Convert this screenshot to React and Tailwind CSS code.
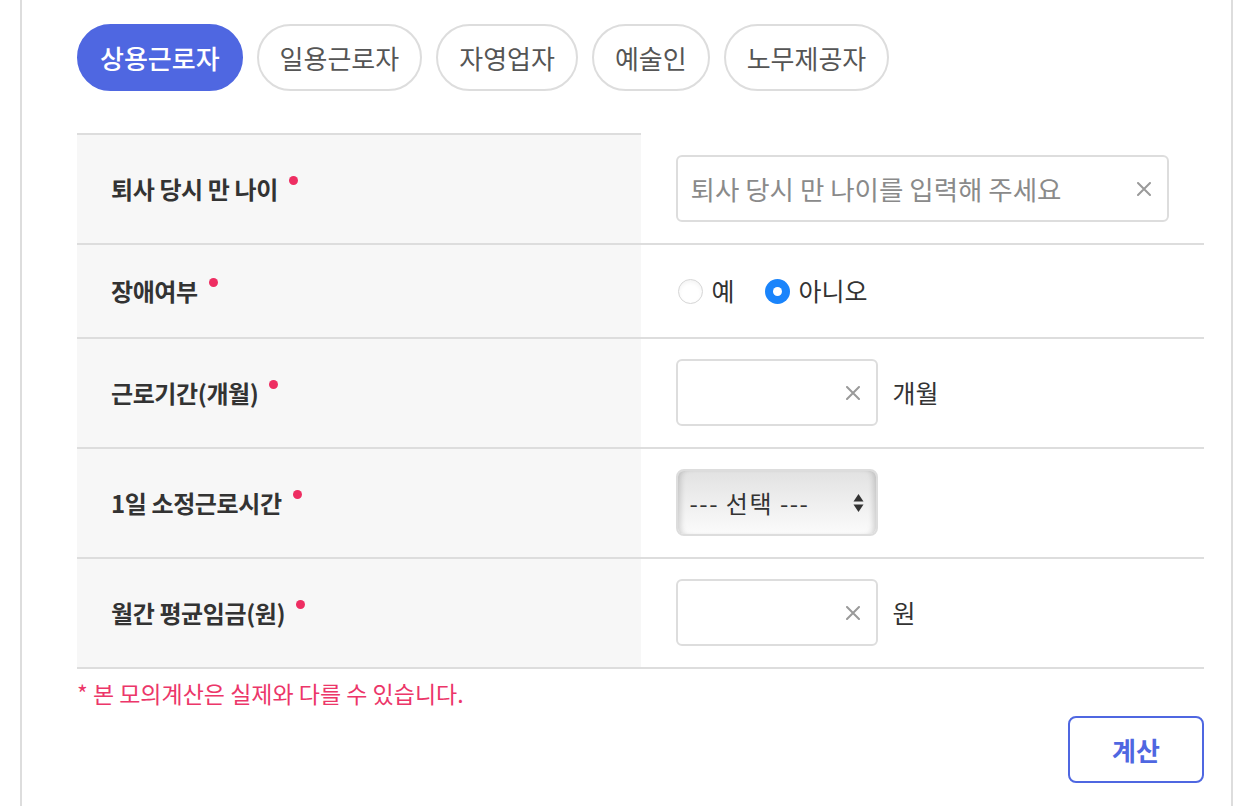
import React, { useState } from "react";

const tabs = ["상용근로자", "일용근로자", "자영업자", "예술인", "노무제공자"];

function ClearIcon() {
    return (
        <svg width="14" height="14" viewBox="0 0 14 14" className="shrink-0">
            <path d="M1 1 L13 13 M13 1 L1 13" stroke="#9a9a9a" strokeWidth="2" strokeLinecap="round" />
        </svg>
    );
}

function Label({ children, first }) {
    return (
        <div
            className={
                "flex items-center bg-[#f7f7f7] pl-[34px] py-[30px] border-b-2 border-[#dddddd] " +
                (first ? "border-t-2" : "")
            }
        >
            <span className="text-[24px] leading-[32px] font-bold text-[#333] tracking-[-0.4px]">{children}</span>
            <span className="ml-[11px] mb-[18px] w-[9px] h-[9px] rounded-full bg-[#ee2e62]"></span>
        </div>
    );
}

function Field({ children, first, pad }) {
    return (
        <div
            className={
                "flex items-center px-[35px] border-b-2 border-[#dddddd] " +
                (first ? "mt-[2px] " : "") +
                (pad ? "pt-[20px] pb-[21px]" : "")
            }
        >
            {children}
        </div>
    );
}

function TextBox({ placeholder, className }) {
    return (
        <div
            className={
                "flex items-center h-[67px] rounded-md border-2 border-[#dddddd] bg-white pl-[13px] pr-[16px] " +
                className
            }
        >
            <span className="flex-1 text-[26.5px] text-[#8a8a8a] whitespace-nowrap">{placeholder}</span>
            <ClearIcon />
        </div>
    );
}

function Radio({ checked, label, onClick }) {
    return (
        <button className="flex items-center gap-[9px]" onClick={onClick}>
            {checked ? (
                <span className="flex items-center justify-center w-[25px] h-[25px] rounded-full bg-[#1a84fb]">
                    <span className="w-[9px] h-[9px] rounded-full bg-white"></span>
                </span>
            ) : (
                <span className="w-[25px] h-[25px] rounded-full border border-[#d6d6d6] bg-white shadow-inner"></span>
            )}
            <span className="text-[25px] text-[#333]">{label}</span>
        </button>
    );
}

export default function App() {
    const [active, setActive] = useState(0);
    const [disabled, setDisabled] = useState(false);

    return (
        <div className="min-h-[806px] bg-white font-['Noto_Sans_CJK_KR','Noto_Sans',sans-serif]">
            <div className="ml-[20px] w-[1213px] min-h-[806px] border-x-2 border-[#dddddd] pl-[55px] pr-[27px] pt-[24px]">
                {/* tabs */}
                <div className="flex items-center gap-[14px]">
                    {tabs.map((t, i) => (
                        <button
                            key={t}
                            onClick={() => setActive(i)}
                            className={
                                "h-[67px] rounded-full px-[21px] text-[26px] whitespace-nowrap " +
                                (active === i
                                    ? "bg-[#4f67e1] text-white font-medium border-2 border-[#4f67e1]"
                                    : "bg-white text-[#555] border-2 border-[#dddddd]")
                            }
                        >
                            {t}
                        </button>
                    ))}
                </div>

                {/* form table */}
                <div className="grid grid-cols-2 mt-[42px]">
                    <Label first>퇴사 당시 만 나이</Label>
                    <Field first pad>
                        <TextBox placeholder="퇴사 당시 만 나이를 입력해 주세요" className="w-full" />
                    </Field>

                    <Label>장애여부</Label>
                    <Field>
                        <div className="flex items-center gap-[30px] pl-[2px]">
                            <Radio checked={disabled} label="예" onClick={() => setDisabled(true)} />
                            <Radio checked={!disabled} label="아니오" onClick={() => setDisabled(false)} />
                        </div>
                    </Field>

                    <Label>근로기간(개월)</Label>
                    <Field pad>
                        <TextBox placeholder="" className="w-[202px]" />
                        <span className="ml-[15px] text-[25px] text-[#333]">개월</span>
                    </Field>

                    <Label>1일 소정근로시간</Label>
                    <Field pad>
                        <div className="flex items-center w-[202px] h-[67px] rounded-lg border-2 border-[#dddddd] bg-gradient-to-b from-[#e2e2e2] to-[#fbfbfb] shadow-[inset_6px_0_6px_-4px_rgba(0,0,0,0.18),inset_-6px_0_6px_-4px_rgba(0,0,0,0.18)] pl-[12px] pr-[12px]">
                            <span className="flex-1 text-[24px] tracking-[1.5px] text-[#333] whitespace-nowrap">--- 선택 ---</span>
                            <svg width="11" height="20" viewBox="0 0 11 20">
                                <path d="M5.5 1 L10.5 8.5 L0.5 8.5 Z" fill="#333" />
                                <path d="M5.5 19 L10.5 11.5 L0.5 11.5 Z" fill="#333" />
                            </svg>
                        </div>
                    </Field>

                    <Label>월간 평균임금(원)</Label>
                    <Field pad>
                        <TextBox placeholder="" className="w-[202px]" />
                        <span className="ml-[15px] text-[25px] text-[#333]">원</span>
                    </Field>
                </div>

                <p className="mt-[9px] text-[23px] text-[#ec3669] leading-[30px]">* 본 모의계산은 실제와 다를 수 있습니다.</p>

                <div className="flex justify-end mt-[8px]">
                    <button className="w-[136px] h-[67px] rounded-lg border-2 border-[#4f67e1] bg-white text-[26px] font-bold text-[#4f67e1]">
                        계산
                    </button>
                </div>
            </div>
        </div>
    );
}
